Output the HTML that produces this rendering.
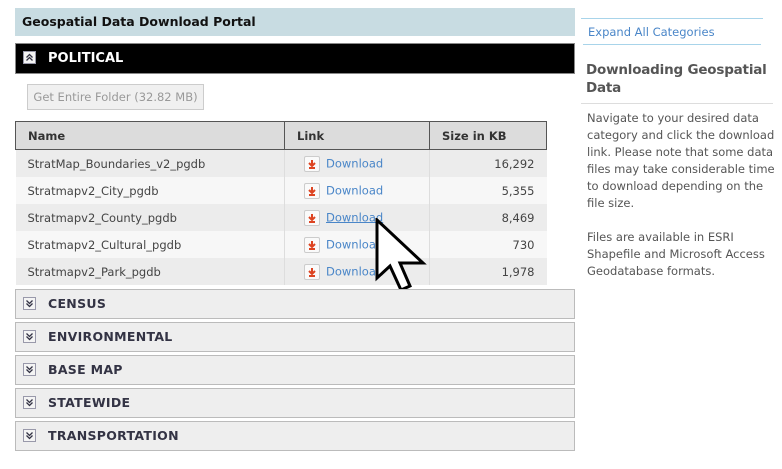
<!DOCTYPE html>
<html><head><style>
body{margin:0;width:782px;height:469px;background:#fff;font-family:"DejaVu Sans","Liberation Sans",sans-serif;position:relative;overflow:hidden}
.a{position:absolute}
.hdr{left:15px;top:8px;width:560px;height:28px;background:#c8dce2;font-weight:bold;font-size:12.5px;line-height:28px;text-indent:7px;color:#111}
.pol{left:15px;top:43px;width:558px;height:29px;background:#000;border:1px solid #888;color:#fff;font-weight:bold;font-size:13px;line-height:29px}
.ic{position:absolute;left:7px;top:7px;width:11px;height:11px;border:1px solid #99a;background:#f4f4f4}
.ic svg{display:block}
.btn{left:27px;top:84px;width:175px;height:24px;border:1px solid #ccc;background:#f0f0f0;color:#999;font-size:11.5px;line-height:24px;text-align:center}
table{position:absolute;left:15px;top:121px;width:532px;border-collapse:collapse;font-size:11.5px}
th{background:#dcdcdc;height:27px;text-align:left;padding:0 0 0 12px;border:1px solid #555;color:#333;font-size:11.5px}
td{height:27px;padding:0;color:#444;border-right:1px solid #ddd}
tr:nth-child(odd) td{background:#f7f7f7}
tr:nth-child(even) td{background:#ececec}
td.n{padding-left:12px}
td.l{padding-left:19px;color:#4a86c8}
td.s{text-align:right;padding-right:12px;border-right:none}
.di{display:inline-block;width:14px;height:14px;border:1px solid #ccc;background:#fafafa;vertical-align:middle;margin-right:6px;position:relative;border-radius:2px}
.cat{left:15px;width:558px;height:28px;background:#eeeeee;border:1px solid #bbb;font-weight:bold;font-size:12.5px;color:#334;line-height:28px;letter-spacing:0.3px}
.cat span,.pol span{position:absolute;left:32px}
.side{left:583px;width:189px;font-size:11.5px;color:#555;line-height:17px}
</style></head><body>
<div class="a hdr">Geospatial Data Download Portal</div>
<div class="a pol"><div class="ic"><svg width="11" height="11"><path d="M2.5 5.5l3-3 3 3M2.5 8.5l3-3 3 3" stroke="#334" stroke-width="1.3" fill="none"/></svg></div><span>POLITICAL</span></div>
<div class="a btn">Get Entire Folder (32.82 MB)</div>
<table>
<tr><th style="width:256px">Name</th><th style="width:132px">Link</th><th>Size in KB</th></tr>
<tr><td class="n">StratMap_Boundaries_v2_pgdb</td><td class="l"><span class="di"><svg width="14" height="14"><path d="M7 3v6M4 6l3 3 3-3M4 11h6" stroke="#d42" stroke-width="2" fill="none"/></svg></span>Download</td><td class="s">16,292</td></tr>
<tr><td class="n">Stratmapv2_City_pgdb</td><td class="l"><span class="di"><svg width="14" height="14"><path d="M7 3v6M4 6l3 3 3-3M4 11h6" stroke="#d42" stroke-width="2" fill="none"/></svg></span>Download</td><td class="s">5,355</td></tr>
<tr><td class="n">Stratmapv2_County_pgdb</td><td class="l"><span class="di"><svg width="14" height="14"><path d="M7 3v6M4 6l3 3 3-3M4 11h6" stroke="#d42" stroke-width="2" fill="none"/></svg></span><u>Download</u></td><td class="s">8,469</td></tr>
<tr><td class="n">Stratmapv2_Cultural_pgdb</td><td class="l"><span class="di"><svg width="14" height="14"><path d="M7 3v6M4 6l3 3 3-3M4 11h6" stroke="#d42" stroke-width="2" fill="none"/></svg></span>Download</td><td class="s">730</td></tr>
<tr><td class="n">Stratmapv2_Park_pgdb</td><td class="l"><span class="di"><svg width="14" height="14"><path d="M7 3v6M4 6l3 3 3-3M4 11h6" stroke="#d42" stroke-width="2" fill="none"/></svg></span>Download</td><td class="s">1,978</td></tr>
</table>
<svg class="a" style="left:374px;top:218px" width="54" height="76"><path d="M3 2 L3 60 L16 48 L27 72 L36 68 L26 45 L49 45 Z" fill="#fff" stroke="#000" stroke-width="3" stroke-linejoin="miter"/></svg>
<div class="a cat" style="top:289px"><div class="ic"><svg width="11" height="11"><path d="M2.5 2.5l3 3 3-3M2.5 5.5l3 3 3-3" stroke="#334" stroke-width="1.3" fill="none"/></svg></div><span>CENSUS</span></div>
<div class="a cat" style="top:322px"><div class="ic"><svg width="11" height="11"><path d="M2.5 2.5l3 3 3-3M2.5 5.5l3 3 3-3" stroke="#334" stroke-width="1.3" fill="none"/></svg></div><span>ENVIRONMENTAL</span></div>
<div class="a cat" style="top:355px"><div class="ic"><svg width="11" height="11"><path d="M2.5 2.5l3 3 3-3M2.5 5.5l3 3 3-3" stroke="#334" stroke-width="1.3" fill="none"/></svg></div><span>BASE MAP</span></div>
<div class="a cat" style="top:388px"><div class="ic"><svg width="11" height="11"><path d="M2.5 2.5l3 3 3-3M2.5 5.5l3 3 3-3" stroke="#334" stroke-width="1.3" fill="none"/></svg></div><span>STATEWIDE</span></div>
<div class="a cat" style="top:421px"><div class="ic"><svg width="11" height="11"><path d="M2.5 2.5l3 3 3-3M2.5 5.5l3 3 3-3" stroke="#334" stroke-width="1.3" fill="none"/></svg></div><span>TRANSPORTATION</span></div>
<div class="a" style="left:581px;top:18px;width:182px;border-top:1px solid #a8d4ea"></div>
<div class="a side" style="top:24px;left:588px;color:#4a86c8">Expand All Categories</div>
<div class="a" style="left:583px;top:44px;width:178px;border-top:1px solid #a8d4ea"></div>
<div class="a side" style="top:61px;left:586px;width:195px;font-size:13.5px;font-weight:bold;color:#555;line-height:18px;letter-spacing:-0.2px">Downloading Geospatial<br>Data</div>
<div class="a" style="left:581px;top:103px;width:192px;border-top:1px solid #ddd"></div>
<div class="a side" style="top:110px;left:587px">Navigate to your desired data category and click the download link. Please note that some data files may take considerable time to download depending on the file size.<br><br>Files are available in ESRI Shapefile and Microsoft Access Geodatabase formats.</div>
</body></html>
